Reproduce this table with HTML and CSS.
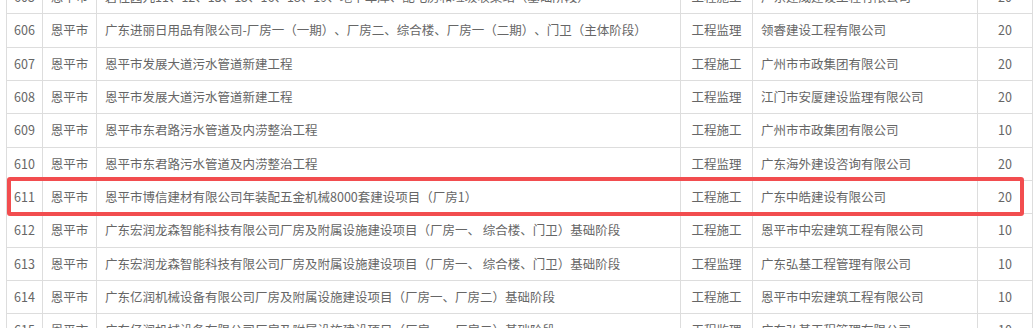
FILE: index.html
```html
<!DOCTYPE html>
<html lang="zh-CN">
<head>
<meta charset="utf-8">
<link rel="stylesheet" href="styles.css">
</head>
<body>
<div class="viewport">
  <div class="wrap">
    <table class="grid">
      <colgroup>
        <col class="c-no"><col class="c-area"><col class="c-name"><col class="c-type"><col class="c-co"><col class="c-score">
      </colgroup>
      <tbody>
        <tr><td class="ctr">605</td><td class="ctr">恩平市</td><td>碧桂园九11、12、13、15、16、18、19、地下车库、配电房和垃圾收集站（基础阶段）</td><td class="ctr">工程施工</td><td>广东建威建设工程有限公司</td><td class="ctr">20</td></tr>
        <tr><td class="ctr">606</td><td class="ctr">恩平市</td><td>广东进丽日用品有限公司-厂房一（一期）、厂房二、综合楼、厂房一（二期）、门卫（主体阶段）</td><td class="ctr">工程监理</td><td>领睿建设工程有限公司</td><td class="ctr">20</td></tr>
        <tr><td class="ctr">607</td><td class="ctr">恩平市</td><td>恩平市发展大道污水管道新建工程</td><td class="ctr">工程施工</td><td>广州市市政集团有限公司</td><td class="ctr">20</td></tr>
        <tr><td class="ctr">608</td><td class="ctr">恩平市</td><td>恩平市发展大道污水管道新建工程</td><td class="ctr">工程监理</td><td>江门市安厦建设监理有限公司</td><td class="ctr">20</td></tr>
        <tr><td class="ctr">609</td><td class="ctr">恩平市</td><td>恩平市东君路污水管道及内涝整治工程</td><td class="ctr">工程施工</td><td>广州市市政集团有限公司</td><td class="ctr">10</td></tr>
        <tr><td class="ctr">610</td><td class="ctr">恩平市</td><td>恩平市东君路污水管道及内涝整治工程</td><td class="ctr">工程监理</td><td>广东海外建设咨询有限公司</td><td class="ctr">20</td></tr>
        <tr><td class="ctr">611</td><td class="ctr">恩平市</td><td>恩平市博信建材有限公司年装配五金机械8000套建设项目（厂房1）</td><td class="ctr">工程施工</td><td>广东中皓建设有限公司</td><td class="ctr">20</td></tr>
        <tr><td class="ctr">612</td><td class="ctr">恩平市</td><td>广东宏润龙森智能科技有限公司厂房及附属设施建设项目（厂房一、 综合楼、门卫）基础阶段</td><td class="ctr">工程施工</td><td>恩平市中宏建筑工程有限公司</td><td class="ctr">10</td></tr>
        <tr><td class="ctr">613</td><td class="ctr">恩平市</td><td>广东宏润龙森智能科技有限公司厂房及附属设施建设项目（厂房一、 综合楼、门卫）基础阶段</td><td class="ctr">工程监理</td><td>广东弘基工程管理有限公司</td><td class="ctr">10</td></tr>
        <tr><td class="ctr">614</td><td class="ctr">恩平市</td><td>广东亿润机械设备有限公司厂房及附属设施建设项目（厂房一、厂房二）基础阶段</td><td class="ctr">工程施工</td><td>恩平市中宏建筑工程有限公司</td><td class="ctr">10</td></tr>
        <tr><td class="ctr">615</td><td class="ctr">恩平市</td><td>广东亿润机械设备有限公司厂房及附属设施建设项目（厂房一、厂房二）基础阶段</td><td class="ctr">工程监理</td><td>广东弘基工程管理有限公司</td><td class="ctr">10</td></tr>
      </tbody>
    </table>
    <div class="highlight"></div>
  </div>
</div>
</body>
</html>
```

FILE: styles.css
```css
html, body {
  margin: 0;
  padding: 0;
  background: #ffffff;
}

.viewport {
  width: 1035px;
  height: 328px;
  overflow: hidden;
}

.wrap {
  position: relative;
  padding-left: 6px;
  margin-top: -20px;
}

.grid {
  border-collapse: collapse;
  table-layout: fixed;
  width: 1026px;
  font-family: "Microsoft YaHei", "Noto Sans CJK SC", "Noto Sans", sans-serif;
  font-size: 12.5px;
  color: #666666;
  text-spacing-trim: space-all;
  font-feature-settings: "halt" 0, "chws" 0;
}

.c-no { width: 36px; }
.c-area { width: 54px; }
.c-name { width: 584px; }
.c-type { width: 72px; }
.c-co { width: 225px; }
.c-score { width: 55px; }

.grid td {
  border: 1px solid #dddddd;
  height: 32.33px;
  padding: 0 8px;
  line-height: 18px;
  white-space: pre;
  overflow: hidden;
  vertical-align: middle;
}

.grid td.ctr {
  text-align: center;
  padding: 0 2px;
}

.highlight {
  position: absolute;
  left: 7px;
  top: 197px;
  width: 1009px;
  height: 31px;
  border: 4px solid #f24d4f;
  border-radius: 3px;
}
```
